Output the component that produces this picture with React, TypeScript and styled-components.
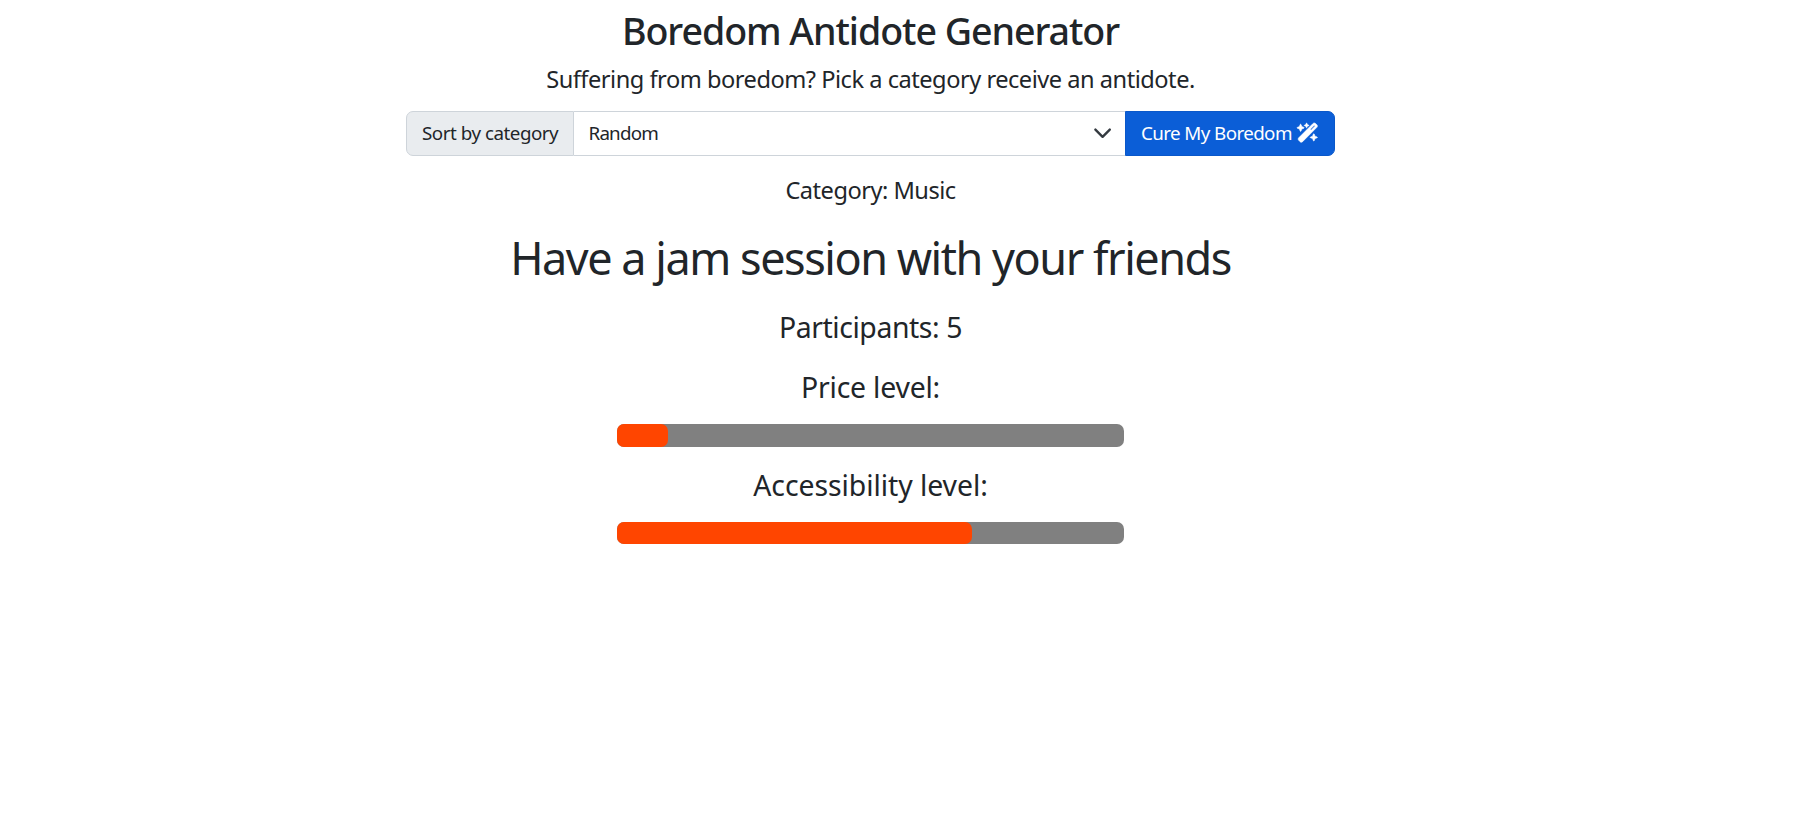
import React from "react";
import styled, { createGlobalStyle } from "styled-components";
import { FaWandMagicSparkles } from "react-icons/fa6";

const GlobalStyle = createGlobalStyle`
  *, *::before, *::after { box-sizing: border-box; }
  body {
    margin: 0;
    background: #fff;
    color: #212529;
    font-family: "Noto Sans", "Open Sans", sans-serif;
  }
`;

const Page = styled.main`
  display: flex;
  flex-direction: column;
  align-items: center;
  padding: 8px 69px 0 0;
`;

const Title = styled.h1`
  margin: 0;
  font-size: 37.6px;
  line-height: 46px;
  font-weight: 500;
  letter-spacing: -1.05px;
  white-space: nowrap;
`;

const Lead = styled.p<{ $top: number; $tracking: number }>`
  margin: ${(p) => p.$top}px 0 0;
  font-size: 23.6px;
  line-height: 36px;
  letter-spacing: ${(p) => p.$tracking}px;
  white-space: nowrap;
`;

const Activity = styled.h2`
  margin: 23px 0 0;
  font-size: 45px;
  line-height: 54px;
  font-weight: 400;
  letter-spacing: -1.47px;
  white-space: nowrap;
`;

const Detail = styled.p<{ $top: number; $tracking: number }>`
  margin: ${(p) => p.$top}px 0 0;
  font-size: 28.4px;
  line-height: 36px;
  letter-spacing: ${(p) => p.$tracking}px;
  white-space: nowrap;
`;

const InputGroup = styled.div`
  display: flex;
  width: 929px;
  height: 45px;
  margin-top: 14px;
  font-size: 18.8px;
  line-height: 26px;
`;

const Label = styled.label`
  display: flex;
  align-items: center;
  width: 168px;
  padding: 0 0 2px 15px;
  background: #e9ecef;
  border: 1px solid #ced4da;
  border-radius: 7px 0 0 7px;
  letter-spacing: -0.48px;
  white-space: nowrap;
`;

const SelectBox = styled.div`
  display: flex;
  flex: 1;
  align-items: center;
  justify-content: space-between;
  padding: 0 12.5px 0 14.5px;
  border: solid #ced4da;
  border-width: 1px 0;
  letter-spacing: -0.8px;
`;

const SelectValue = styled.span`
  padding-bottom: 2px;
`;

const Button = styled.button`
  display: flex;
  align-items: center;
  gap: 5px;
  width: 210px;
  padding: 0 0 2px 15px;
  border: 1px solid #0a58ca;
  border-radius: 0 7px 7px 0;
  background: #0b5ed7;
  color: #fff;
  font: inherit;
  letter-spacing: -0.6px;
  white-space: nowrap;
`;

const WandIcon = styled(FaWandMagicSparkles)`
  flex: none;
  width: 21.6px;
  height: 19.2px;
  overflow: visible;

  path {
    stroke: currentColor;
    stroke-width: 16px;
  }
`;

const Track = styled.div<{ $height: number }>`
  width: 507px;
  height: ${(p) => p.$height}px;
  margin-top: 19px;
  border-radius: 7px;
  background: #808080;
`;

const Fill = styled.div`
  height: 100%;
  border-radius: 7px;
  background: #ff4500;
`;

function Chevron() {
  return (
    <svg width="19.2" height="14.4" viewBox="0 0 16 12" fill="none" stroke="#343a40" strokeWidth="2" strokeLinecap="round" strokeLinejoin="round">
      <path d="m2 3 6 6 6-6" />
    </svg>
  );
}

function Meter({ level, height }: { level: number; height: number }) {
  return (
    <Track $height={height}>
      <Fill style={{ width: `${level * 100}%` }} />
    </Track>
  );
}

export default function App() {
  return (
    <>
      <GlobalStyle />
      <Page>
        <Title>Boredom Antidote Generator</Title>
        <Lead $top={7} $tracking={-0.48}>Suffering from boredom? Pick a category receive an antidote.</Lead>
        <InputGroup>
          <Label>Sort by category</Label>
          <SelectBox>
            <SelectValue>Random</SelectValue>
            <Chevron />
          </SelectBox>
          <Button>
            <span>Cure My Boredom</span>
            <WandIcon />
          </Button>
        </InputGroup>
        <Lead $top={16} $tracking={-0.5}>Category: Music</Lead>
        <Activity>Have a jam session with your friends</Activity>
        <Detail $top={24} $tracking={-0.42}>Participants: 5</Detail>
        <Detail $top={24} $tracking={-0.2}>Price level:</Detail>
        <Meter level={0.1} height={23} />
        <Detail $top={20} $tracking={-0.06}>Accessibility level:</Detail>
        <Meter level={0.7} height={22} />
      </Page>
    </>
  );
}
